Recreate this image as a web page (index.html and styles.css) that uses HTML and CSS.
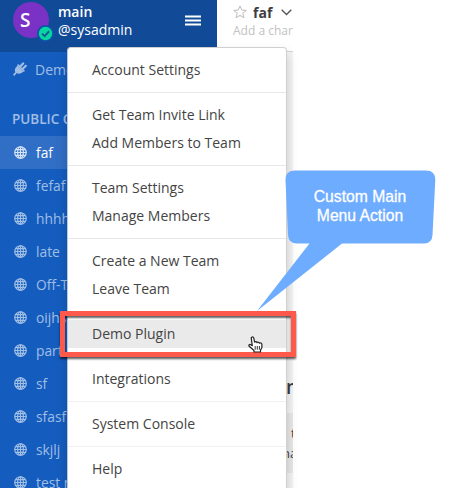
FILE: index.html
```html
<!DOCTYPE html>
<html lang="en">
<head>
<meta charset="utf-8">
<title>Main menu</title>
<link rel="stylesheet" href="styles.css">
</head>
<body>
<svg class="defs" aria-hidden="true">
  <symbol id="globe" viewBox="0 0 14 14">
    <g fill="none" stroke="currentColor" stroke-width="1.3">
      <circle cx="7" cy="7" r="6.2"/>
      <ellipse cx="7" cy="7" rx="3.1" ry="6.2"/>
      <path d="M7 1v12M1 7h12M1.8 4h10.4M1.8 10h10.4"/>
    </g>
  </symbol>
</svg>
<div class="app">
  <aside class="sidebar">
    <header class="team-header">
      <div class="avatar">S
        <svg class="status" viewBox="0 0 16 16"><circle cx="8" cy="8" r="8" fill="#0f51a6"/><circle cx="8" cy="8" r="6.3" fill="#06d6a0"/><path d="M4.8 8.1l2.4 2.4 4.2-4.6" fill="none" stroke="#145b9b" stroke-width="1.9"/></svg>
      </div>
      <div class="identity"><strong>main</strong><span>@sysadmin</span></div>
      <svg class="burger" viewBox="0 0 16 11"><path d="M0 1.500h16M0 5.500h16M0 9.500h16" stroke="#fff" stroke-width="2"/></svg>
    </header>
    <div class="plugin-row">
      <svg class="plug" viewBox="0 0 14 14"><g fill="currentColor"><path d="M4.500 3.800l5.800 5.800c-1.800 2.200-4.500 2.700-6.600 1.500L1.300 13.900 0 12.600l2.300-2.400C1.200 8 2.200 5.500 4.500 3.800z"/><path d="M4 3.300l6.800 6.800 1.200-1.200-6.800-6.800z"/></g><path d="M7.200 4.600l2.900-3.200M9.600 7l3.200-3.200" stroke="currentColor" stroke-width="2.200" stroke-linecap="round"/></svg>
      <span>Demo</span>
    </div>
    <h2 class="section">PUBLIC C</h2>
    <ul class="channels">
      <li class="active"><svg><use href="#globe"/></svg>faf</li>
      <li><svg><use href="#globe"/></svg>fefaf</li>
      <li><svg><use href="#globe"/></svg>hhhh</li>
      <li><svg><use href="#globe"/></svg>late</li>
      <li><svg><use href="#globe"/></svg>Off-T</li>
      <li><svg><use href="#globe"/></svg>oijhs</li>
      <li><svg><use href="#globe"/></svg>part</li>
      <li><svg><use href="#globe"/></svg>sf</li>
      <li><svg><use href="#globe"/></svg>sfasf</li>
      <li><svg><use href="#globe"/></svg>skjlj</li>
      <li><svg><use href="#globe"/></svg>test n</li>
    </ul>
  </aside>
  <main class="center">
    <header class="channel-header">
      <div class="channel-title">
        <svg class="star" viewBox="0 0 14 14"><path d="M7 .9l1.800 4.200 4.500.3-3.500 2.900 1.200 4.500L7 10.400l-4 2.400 1.200-4.500L.7 5.400l4.500-.3z" fill="none" stroke="#bbb" stroke-width="1"/></svg>
        <strong>faf</strong>
        <svg class="chevron" viewBox="0 0 11 7"><path d="M.7 .8l4.800 4.800L10.300 .8" fill="none" stroke="#555" stroke-width="1.400"/></svg>
      </div>
      <div class="channel-desc">Add a char</div>
    </header>
    <div class="posts">
      <div class="post-title">n</div>
      <div class="post-body"><span>t</span><span>na</span></div>
    </div>
  </main>
</div>
<nav class="menu">
  <ul><li>Account Settings</li></ul>
  <ul><li>Get Team Invite Link</li><li>Add Members to Team</li></ul>
  <ul><li>Team Settings</li><li>Manage Members</li></ul>
  <ul><li>Create a New Team</li><li>Leave Team</li></ul>
  <ul><li class="hover">Demo Plugin</li></ul>
  <ul class="faint"><li>Integrations</li></ul>
  <ul class="faint"><li>System Console</li></ul>
  <ul><li>Help</li></ul>
</nav>
<div class="callout">
  <svg viewBox="0 0 151 142"><path d="M10 .5H141Q150.500 .5 150.300 10L147.500 65Q147 73.500 139 73.500H57L-28 141 24.500 73.500H12Q3.500 73.500 3 65L.5 10Q.3 .5 10 .5z" fill="#6eacff"/></svg>
  <p>Custom Main<br>Menu Action</p>
</div>
<div class="highlight"></div>
<svg class="pointer" viewBox="0 0 15 17"><path d="M4.300 9.700L3.300 2.600C3 .6 5.300 .4 5.800 2.200L6.600 6.200C7 5.300 8.900 5.500 9 6.600 9.600 5.900 11.200 6.200 11.300 7.200 12.300 6.600 13.900 7 13.900 8.400V11.500L12.500 14.200V16H6V14.500L1.200 10.300C.3 9 1.700 8 2.900 8.800z" fill="#fff" stroke="#222" stroke-width="1.200" stroke-linejoin="round"/><path d="M7.200 10v3.700M9.300 10v3.700M11.400 10v3.700" stroke="#222" stroke-width=".9"/></svg>
</body>
</html>
```
FILE: styles.css
```css
* { box-sizing: border-box; }
body { margin: 0; width: 462px; height: 488px; overflow: hidden; position: relative; background: #fff; font-family: "Open Sans", sans-serif; }
ul, h2, p { margin: 0; padding: 0; list-style: none; }
.defs { display: none; }
.app { display: flex; width: 293px; height: 488px; overflow: hidden; }
.sidebar { width: 217px; flex: none; background: #145dbf; color: #a1bee5; font-size: 13.800px; white-space: nowrap; }
.team-header { height: 52px; padding: 2px 16px 0 13px; display: flex; align-items: flex-start; background: #114b98; color: #fff; }
.avatar { position: relative; flex: none; width: 36px; height: 36px; border-radius: 50%; background: #7a31c5; font: 600 19px/36px "Open Sans", sans-serif; padding-left: 7px; }
.status { position: absolute; left: 24px; top: 23px; width: 17px; height: 17px; }
.identity { margin-left: 9px; display: flex; flex-direction: column; flex: 1; font-size: 14px; line-height: 18px; padding-top: 1px; }
.identity strong { font-weight: 600; }
.burger { width: 16px; height: 11px; margin-top: 13px; }
.plugin-row { height: 34px; display: flex; align-items: center; gap: 8px; padding-left: 13px; font-size: 14px; }
.plug { width: 14px; height: 14px; }
.section { margin-top: 17px; height: 33px; padding-left: 12px; font: 600 13.500px/32px "Open Sans", sans-serif; }
.channels li { height: 33px; display: flex; align-items: center; gap: 9px; padding-left: 14px; }
.channels svg { width: 13px; height: 13px; }
.channels .active { background: #316fc6; color: #fff; }
.channels .active svg { color: #d5e3f6; }
.center { flex: 1; overflow: hidden; white-space: nowrap; background: #f4f4f4; }
.channel-header { height: 52px; padding: 2px 0 0 16px; background: #fff; border-bottom: 1px solid #d4d4d4; }
.channel-title { display: flex; align-items: center; height: 20px; font-size: 14px; color: #3d3c40; }
.star { width: 14px; height: 14px; margin-right: 6px; }
.chevron { width: 11px; height: 7px; margin-left: 9px; }
.channel-desc { font-size: 12px; line-height: 18px; color: #c2c2c2; }
.posts { padding: 321px 0 0 69px; }
.post-title { height: 40px; line-height: 28px; font-size: 19px; font-weight: 600; color: #3d3c40; }
.post-body { height: 60px; margin-left: -10px; background: #e8e8e8; color: #3d3c40; font-size: 13px; line-height: 20px; display: flex; flex-direction: column; padding: 10px 0 0 6px; }
.post-body span:first-child { padding-left: 9px; }
.menu { position: absolute; left: 67px; top: 47px; width: 220px; height: 460px; padding-top: 1px; background: #fff; border: 1px solid #d0d0d0; border-left-color: #b5c9e2; border-radius: 4px; box-shadow: 0 6px 12px rgba(0,0,0,.175); font-size: 14px; line-height: 28px; color: #444; }
.menu ul { padding: 8px 0; border-bottom: 1px solid #e8e8e8; }
.menu ul:first-child { padding-top: 7px; }
.menu .faint { border-color: #f0f0f0; }
.menu li { height: 28px; padding-left: 24px; }
.menu .hover { background: #eaeaea; }
.highlight { position: absolute; left: 60px; top: 311px; width: 236px; height: 46px; border: 5px solid #ff594b; box-shadow: 0 2px 2px rgba(0,0,0,.65), inset 0 2px 2px rgba(0,0,0,.6); }
.callout { position: absolute; left: 285px; top: 170px; width: 151px; height: 142px; }
.callout svg { position: absolute; inset: 0; width: 151px; height: 142px; overflow: visible; }
.callout p { position: relative; left: -.5px; padding-top: 17px; text-align: center; color: #fff; font: 15.700px/19px "Liberation Sans", sans-serif; -webkit-text-stroke: .3px #fff; }
.pointer { position: absolute; left: 248px; top: 336px; width: 15px; height: 17px; }
```
